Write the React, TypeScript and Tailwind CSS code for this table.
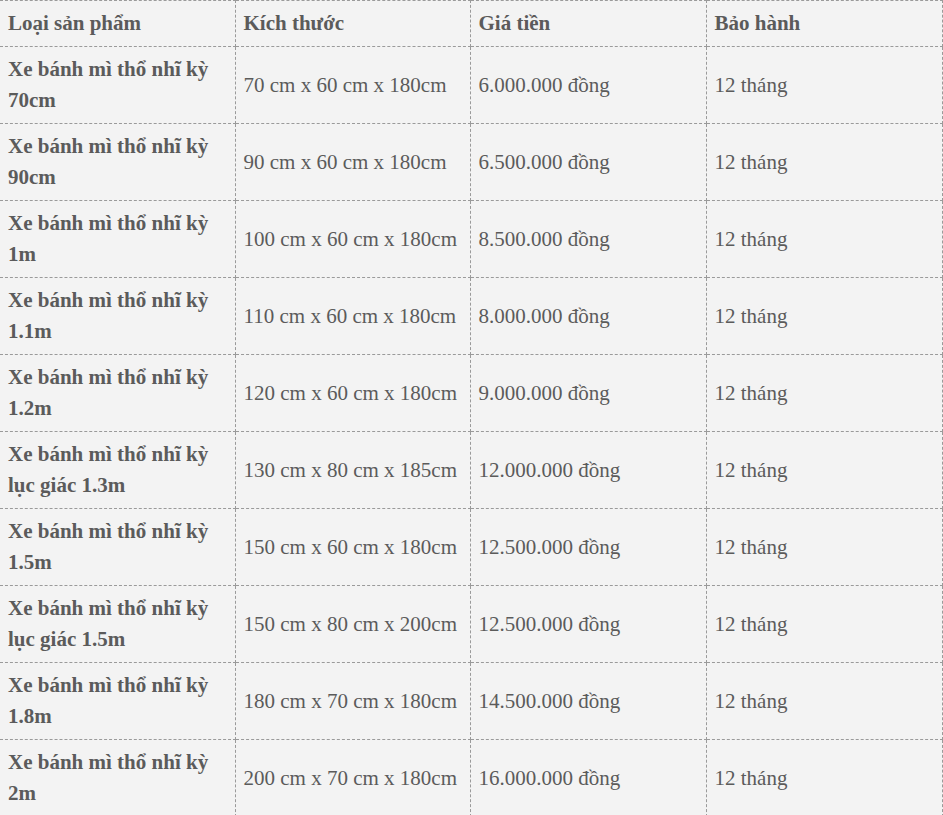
import React from 'react';

const rows = [
  { name: 'Xe bánh mì thổ nhĩ kỳ 70cm', size: '70 cm x 60 cm x 180cm', price: '6.000.000 đồng' },
  { name: 'Xe bánh mì thổ nhĩ kỳ 90cm', size: '90 cm x 60 cm x 180cm', price: '6.500.000 đồng' },
  { name: 'Xe bánh mì thổ nhĩ kỳ 1m', size: '100 cm x 60 cm x 180cm', price: '8.500.000 đồng' },
  { name: 'Xe bánh mì thổ nhĩ kỳ 1.1m', size: '110 cm x 60 cm x 180cm', price: '8.000.000 đồng' },
  { name: 'Xe bánh mì thổ nhĩ kỳ 1.2m', size: '120 cm x 60 cm x 180cm', price: '9.000.000 đồng' },
  { name: 'Xe bánh mì thổ nhĩ kỳ lục giác 1.3m', size: '130 cm x 80 cm x 185cm', price: '12.000.000 đồng' },
  { name: 'Xe bánh mì thổ nhĩ kỳ 1.5m', size: '150 cm x 60 cm x 180cm', price: '12.500.000 đồng' },
  { name: 'Xe bánh mì thổ nhĩ kỳ lục giác 1.5m', size: '150 cm x 80 cm x 200cm', price: '12.500.000 đồng' },
  { name: 'Xe bánh mì thổ nhĩ kỳ 1.8m', size: '180 cm x 70 cm x 180cm', price: '14.500.000 đồng' },
  { name: 'Xe bánh mì thổ nhĩ kỳ 2m', size: '200 cm x 70 cm x 180cm', price: '16.000.000 đồng' },
];

const cell = 'border border-dashed border-[#9a9a9a] px-2 py-[7px] align-middle';

export default function App() {
  return (
    <div className="min-h-screen bg-[#f3f3f3] overflow-hidden">
      <table
        className="w-[942px] table-fixed border-collapse text-[21px] leading-[31px] text-[#5b5b5b]"
        style={{ fontFamily: '"Liberation Serif", "Times New Roman", serif' }}
      >
        <colgroup>
          <col className="w-[235px]" />
          <col className="w-[235px]" />
          <col className="w-[236px]" />
          <col className="w-[236px]" />
        </colgroup>
        <thead>
          <tr className="text-left font-bold">
            <th className={`${cell} border-l-0 py-[6px]`}>Loại sản phẩm</th>
            <th className={`${cell} py-[6px]`}>Kích thước</th>
            <th className={`${cell} py-[6px]`}>Giá tiền</th>
            <th className={`${cell} py-[6px]`}>Bảo hành</th>
          </tr>
        </thead>
        <tbody>
          {rows.map((r) => (
            <tr key={r.name + r.size}>
              <td className={`${cell} border-l-0 font-bold`}>{r.name}</td>
              <td className={cell}>{r.size}</td>
              <td className={cell}>{r.price}</td>
              <td className={cell}>12 tháng</td>
            </tr>
          ))}
        </tbody>
      </table>
    </div>
  );
}
